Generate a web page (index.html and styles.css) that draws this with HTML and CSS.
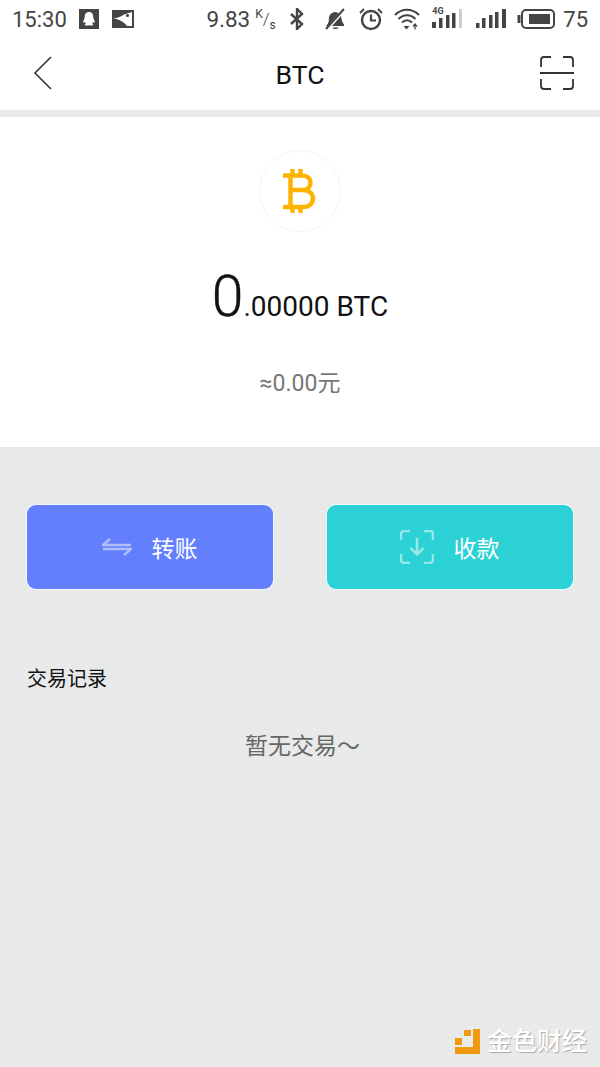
FILE: index.html
```html
<!DOCTYPE html>
<html lang="en">
<head>
<meta charset="UTF-8">
<meta name="viewport" content="width=device-width, initial-scale=1.0">
<title>BTC</title>
<link rel="stylesheet" href="styles.css">
</head>
<body>
<div class="statusbar">
  <div class="status-left">
    <span class="time">15:30</span>
    <svg class="st-qq" width="20" height="20" viewBox="0 0 20 20"><rect width="20" height="20" fill="#444"/><path d="M10 3c-3 0-4.200 2.200-4.200 4.600 0 1-.2 1.500-.8 2.800-.7 1.500-1 3-.5 3.400.4.200.9-.4 1.200-1 .2.900.7 1.600 1.200 2.100-.8.300-1.400.7-1.200 1.200.3.600 2.700.5 4.300.1 1.600.4 4 .5 4.300-.1.200-.5-.4-.9-1.200-1.200.5-.5 1-1.200 1.200-2.100.3.600.8 1.200 1.200 1 .5-.4.200-1.900-.5-3.400-.6-1.300-.8-1.800-.8-2.800C14.200 5.200 13 3 10 3z" fill="#fff"/></svg>
    <svg class="st-pic" width="22" height="18" viewBox="0 0 22 18"><rect width="22" height="18" fill="#444"/><path d="M1 8.500C6 8 9 6.500 12 4.500L20 2v14h-5c-3-4-8-7-14-7.500z" fill="#fff"/><circle cx="15.500" cy="5.500" r="1.600" fill="#444"/></svg>
  </div>
  <div class="status-right">
    <span class="speed">9.83</span>
    <span class="speed-unit"><sup>K</sup>/<sub>s</sub></span>
    <svg class="st-bt" width="16" height="22" viewBox="0 0 16 22"><path d="M2 6l11 10-5 5V1l5 5L2 16" fill="none" stroke="#444" stroke-width="2.400"/></svg>
    <svg class="st-bell" width="22" height="22" viewBox="0 0 22 22"><path d="M2 18c2-2 3-4 3-8 0-3 2.500-5.500 6-6l4 1L4 18zM8 18l9-10c.5 4 1.500 7 3 8.500V18zM8.500 19.500h6c-.5 2-5 2-6 0z" fill="#444"/><path d="M2 21L20 1" stroke="#444" stroke-width="2"/></svg>
    <svg class="st-alarm" width="24" height="24" viewBox="0 0 24 24"><circle cx="12" cy="13" r="9" fill="none" stroke="#444" stroke-width="2.400"/><path d="M12 7.500V13.500H17" fill="none" stroke="#444" stroke-width="2.200"/><path d="M1 6l4-4M23 6l-4-4" stroke="#444" stroke-width="2"/></svg>
    <svg class="st-wifi" width="26" height="22" viewBox="0 0 26 22"><path d="M1 7c7-7 17-7 24 0M4.500 11c5-5 12-5 17 0M8 14.500c3-3 7-3 10 0" fill="none" stroke="#444" stroke-width="2"/><path d="M9.500 18h6L12.500 21.500z" fill="#444"/><path d="M21 21.500v-4M19 18.500l2-2.500 2 2.500" fill="none" stroke="#444" stroke-width="1.300"/></svg>
    <span class="signal-4g">
      <span class="label-4g">4G</span>
      <svg width="30" height="20" viewBox="0 0 30 20"><rect x="0" y="13" width="4" height="6" fill="#444"/><rect x="7" y="9" width="3.500" height="10" fill="#444"/><rect x="14" y="6" width="3.500" height="13" fill="#444"/><rect x="20" y="4" width="3.500" height="15" fill="#444"/><rect x="27" y="0" width="3" height="19" fill="#ccc"/></svg>
    </span>
    <svg class="st-signal" width="31" height="20" viewBox="0 0 31 20"><rect x="0" y="14" width="3.500" height="5" fill="#444"/><rect x="6" y="9" width="3.500" height="10" fill="#444"/><rect x="13" y="6" width="3.500" height="13" fill="#444"/><rect x="19" y="3" width="3.500" height="16" fill="#444"/><rect x="26" y="0" width="4" height="19" fill="#444"/></svg>
    <svg class="st-battery" width="38" height="20" viewBox="0 0 38 20"><rect x="5" y="1" width="32" height="18" rx="4" fill="none" stroke="#444" stroke-width="2"/><path d="M2 6v8" stroke="#444" stroke-width="3"/><rect x="12" y="5" width="21" height="10" fill="#444"/></svg>
    <span class="battery-num">75</span>
  </div>
</div>

<div class="navbar">
  <svg class="nav-back" width="20" height="34" viewBox="0 0 20 34"><path d="M18 1L2 17l16 16" fill="none" stroke="#333" stroke-width="1.600"/></svg>
  <div class="nav-title">BTC</div>
  <svg class="nav-scan" width="34" height="34" viewBox="0 0 34 34"><path d="M1 11V4a3 3 0 0 1 3-3h7M23 1h7a3 3 0 0 1 3 3v7M1 23v7a3 3 0 0 0 3 3h7M23 33h7a3 3 0 0 0 3-3v-7" fill="none" stroke="#333" stroke-width="1.800"/><path d="M0 17h34" stroke="#333" stroke-width="1.800"/></svg>
</div>

<div class="balance-card">
  <div class="coin-icon">
    <svg width="36" height="46" viewBox="0 0 36 46"><path d="M1 7.500h19c5.500 0 8.500 3.500 8.500 7.300 0 4-3 7.200-8 7.200H8.500M20.500 22c6.500 0 10.500 3.500 10.500 8.500 0 5-4 8.500-10 8.500H1M8.500 7.500V39M10.500 7.500V1M18.500 7.500V1M10.500 45v-6M18.500 45v-6" fill="none" stroke="#fdb300" stroke-width="4.400"/></svg>
  </div>
  <div class="amount"><span class="amount-big">0</span>.00000 BTC</div>
  <div class="amount-cny">≈0.00元</div>
</div>

<div class="main-content">
  <div class="actions">
    <div class="action-btn btn-send">
      <svg class="btn-icon" width="30" height="20" viewBox="0 0 30 20"><path d="M8 2L1 8h28M22 18l7-6H1" fill="none" stroke="#fff" stroke-width="2.400"/></svg>
      <span>转账</span>
    </div>
    <div class="action-btn btn-receive">
      <svg class="btn-icon" width="34" height="34" viewBox="0 0 34 34"><path d="M1 10V4a3 3 0 0 1 3-3h6M24 1h6a3 3 0 0 1 3 3v6M1 24v6a3 3 0 0 0 3 3h6M24 33h6a3 3 0 0 0 3-3v-6M17 8v16M10.500 18l6.500 6.500 6.500-6.500" fill="none" stroke="#fff" stroke-width="2.600"/></svg>
      <span>收款</span>
    </div>
  </div>
  <div class="records-title">交易记录</div>
  <div class="records-empty">暂无交易～</div>
</div>

<div class="watermark">
  <svg width="25" height="25" viewBox="0 0 25 25"><path d="M18 0h7v25H0v-7h18z" fill="#f29a0e"/><rect x="9" y="1" width="7" height="6" fill="#f29a0e"/><rect x="0" y="9" width="7" height="7" fill="#f29a0e"/></svg>
  <span>金色财经</span>
</div>
</body>
</html>
```

FILE: styles.css
```css
* {
  margin: 0;
  padding: 0;
  box-sizing: border-box;
}
html, body {
  height: 100%;
}
body {
  width: 600px;
  height: 1067px;
  overflow: hidden;
  background-color: #e8eaea;
  font-family: "Roboto", "Noto Sans CJK SC", sans-serif;
  display: flex;
  flex-direction: column;
  position: relative;
}

/* Status bar */
.statusbar {
  height: 38px;
  background-color: #fff;
  display: flex;
  justify-content: space-between;
  align-items: center;
  padding: 0 12px;
  color: #444;
  flex-shrink: 0;
}
.status-left,
.status-right {
  display: flex;
  align-items: center;
}
.time {
  font-size: 22px;
  margin-right: 12px;
}
.st-qq {
  margin-right: 13px;
}
.speed {
  font-size: 22.5px;
}
.speed-unit {
  font-size: 17px;
  font-weight: 300;
  margin-left: 5px;
  margin-right: 13px;
  width: 21px;
  white-space: nowrap;
}
.speed-unit sup,
.speed-unit sub {
  font-size: 12px;
  font-weight: 400;
  line-height: 0;
}
.st-bell {
  margin-left: 19px;
}
.st-alarm {
  margin-left: 13px;
}
.st-wifi {
  margin-left: 11px;
}
.signal-4g {
  margin-left: 12px;
  position: relative;
  display: block;
  width: 30px;
  height: 20px;
}
.label-4g {
  position: absolute;
  top: -3px;
  left: 0;
  font-size: 9px;
  font-weight: 700;
}
.st-signal {
  margin-left: 14px;
}
.st-battery {
  margin-left: 10px;
}
.battery-num {
  font-size: 22px;
  margin-left: 8px;
}

/* Nav */
.navbar {
  height: 72px;
  background-color: #fff;
  display: grid;
  grid-template-columns: 1fr auto 1fr;
  align-items: center;
  padding: 0 26px 2px;
  flex-shrink: 0;
}
.nav-back {
  margin-left: 7px;
}
.nav-title {
  font-size: 26.5px;
  color: #111;
  padding-top: 2px;
}
.nav-scan {
  justify-self: end;
}

/* Balance */
.balance-card {
  margin-top: 7px;
  height: 330px;
  background-color: #fff;
  display: flex;
  flex-direction: column;
  align-items: center;
  padding-top: 33px;
  flex-shrink: 0;
}
.coin-icon {
  width: 82px;
  height: 82px;
  border: 1px solid #f3f3f3;
  border-radius: 50%;
  display: flex;
  align-items: center;
  justify-content: center;
}
.amount {
  margin-top: 31px;
  font-size: 28px;
  line-height: 68px;
  color: #111;
}
.amount-big {
  font-size: 57px;
  font-weight: 300;
  -webkit-text-stroke: 0.4px #111;
}
.amount-cny {
  margin-top: 23px;
  font-size: 23px;
  color: #777;
}

/* Buttons and records */
.main-content {
  padding: 58px 27px 0;
}
.actions {
  display: flex;
  justify-content: space-between;
}
.action-btn {
  width: 246px;
  height: 84px;
  border-radius: 9px;
  display: flex;
  align-items: center;
  justify-content: center;
  gap: 20px;
  padding-right: 1px;
  color: #fff;
  font-size: 23px;
}
.btn-send {
  background-color: #647ffe;
  box-shadow: 0 0 0 1px #f4f6ff;
}
.btn-receive {
  background-color: #2bd1d5;
  box-shadow: 0 0 0 1px #eefbfb;
}
.btn-icon {
  opacity: 0.5;
}
.records-title {
  margin-top: 76px;
  font-size: 20px;
  line-height: 28px;
  color: #111;
}
.records-empty {
  margin-top: 34px;
  padding-left: 5px;
  text-align: center;
  font-size: 23px;
  line-height: 40px;
  color: #666;
}

/* Watermark */
.watermark {
  position: absolute;
  right: 13px;
  bottom: 13px;
  display: flex;
  align-items: center;
  gap: 7px;
  font-size: 25px;
  font-weight: 500;
  line-height: 25px;
  color: #fff;
  text-shadow: 1px 1px 1px #aaa;
}
```
